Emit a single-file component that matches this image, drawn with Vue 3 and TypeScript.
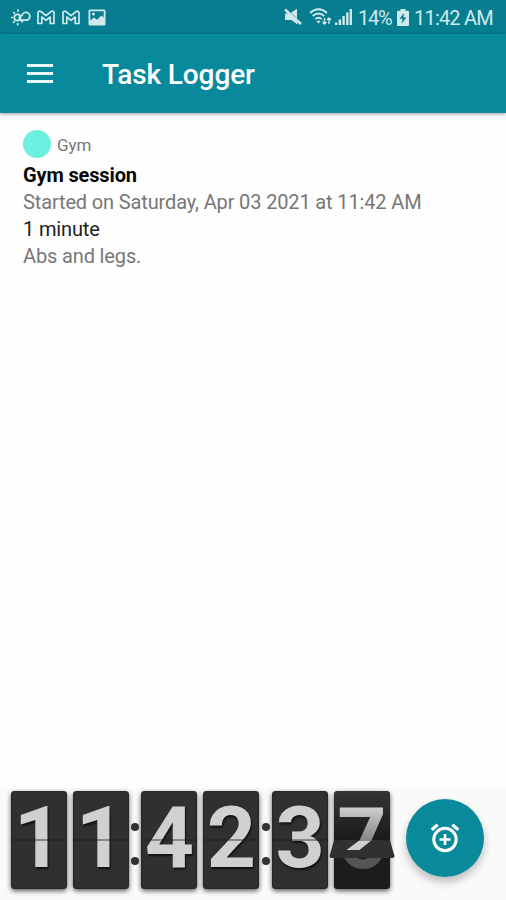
<script setup lang="ts">
interface Task {
  category: string
  color: string
  title: string
  started: string
  duration: string
  notes: string
}

const tasks: Task[] = [
  {
    category: 'Gym',
    color: '#6cf0df',
    title: 'Gym session',
    started: 'Started on Saturday, Apr 03 2021 at 11:42 AM',
    duration: '1 minute',
    notes: 'Abs and legs.',
  },
]

const hours: string[] = ['1', '1']
const minutes: string[] = ['4', '2']
</script>

<template>
  <div class="screen">
    <header class="status">
      <div class="status-left">
        <svg class="weather" width="20" height="18" viewBox="0 0 20 18" fill="none" stroke="currentColor" stroke-width="1.7">
          <circle cx="6.5" cy="9.5" r="3.2" />
          <path d="M7 1.5v2.3M2.2 4l1.7 1.7M0 9.5h2M2 14.8l1.8-1.8M6.7 15v2.5M10.5 13l1.3 1.4" />
          <path d="M9 12.2C7.2 9.3 9.2 7.3 11 7.5c.7-3.2 4.6-4 6.7-2 2.4 2.600.7 6.700-2.700 6.700z" />
        </svg>
        <svg v-for="n in 2" :key="n" class="mail" width="18" height="15" viewBox="0 0 18 15" fill="none" stroke="currentColor" stroke-width="1.700" stroke-linejoin="round">
          <path d="M1 13.500V2.500Q1.500 .5 3.800 1.500L9 5.700l5.200-4.200Q16.500.5 17 2.500v11h-3.800V7L9 10.300 4.800 7v6.500z" />
        </svg>
        <svg class="picture" width="18" height="17" viewBox="0 0 18 17">
          <path fill="currentColor" fill-rule="evenodd" d="M2 .5h14q1.500 0 1.500 1.500v13q0 1.500-1.500 1.500H2Q.5 16.500.5 15V2Q.5.5 2 .5zM2.300 2.300v9.200l3.700-3 3 2.300 4.500-4.200 2.200 2V2.300z" />
          <circle cx="5.500" cy="5" r="1.500" fill="currentColor" />
        </svg>
      </div>
      <div class="status-right">
        <svg class="mute" width="18" height="18" viewBox="0 0 18 18" fill="currentColor">
          <path d="M1 5.500h3.500l9 8.500v2.500L7.500 12H1zM7 4.800 13 .8v9.500z" />
          <path d="M1 1.500 17 16" stroke="currentColor" stroke-width="2.400" />
        </svg>
        <svg class="wifi" width="23" height="18" viewBox="0 0 23 18" fill="none" stroke="currentColor" stroke-width="1.900">
          <path d="M1 5q8.500-7.500 17 0M3.700 8q5.800-5 11.600 0M6.300 11q3.200-2.700 6.400 0" />
          <path d="m9.500 15.500-2-2.300q2-1.500 4 0z" fill="currentColor" stroke="none" />
          <path d="M15.500 10v6m-2-2 2 2 2-2M20 16v-6m-2 2 2-2 2 2" stroke-width="1.400" />
        </svg>
        <svg class="signal" width="17" height="18" viewBox="0 0 17 18" fill="currentColor">
          <path d="M0 14.500h2.400V17H0zM3.700 11.500h2.400V17h-2.400zM7.400 8h2.400v9h-2.400zM11.100 4.500h2.400V17h-2.400zM14.600 1H17v16h-2.400z" />
        </svg>
        <span class="battery-text">14%</span>
        <svg class="battery" width="12" height="17" viewBox="0 0 12 17">
          <path fill="currentColor" fill-rule="evenodd" d="M3.500 0h5v1.800H11q1 0 1 1V16q0 1-1 1H1q-1 0-1-1V2.800q0-1 1-1h2.500zM7 4 2.500 9.800h3L4.700 14.500 9.500 8.500h-3z" />
        </svg>
        <span class="time">11:42 AM</span>
      </div>
    </header>

    <div class="toolbar">
      <button class="menu" aria-label="Menu"><i></i><i></i><i></i></button>
      <h1>Task Logger</h1>
    </div>

    <main>
      <article v-for="task in tasks" :key="task.title">
        <div class="category">
          <span class="dot" :style="{ background: task.color }"></span>
          <span class="category-name">{{ task.category }}</span>
        </div>
        <h2>{{ task.title }}</h2>
        <p class="started">{{ task.started }}</p>
        <p class="duration">{{ task.duration }}</p>
        <p class="notes">{{ task.notes }}</p>
      </article>
    </main>

    <footer>
      <div class="clock">
        <div class="pair">
          <div v-for="(d, i) in hours" :key="i" class="card"><span>{{ d }}</span></div>
        </div>
        <div class="colon"><i></i><i></i></div>
        <div class="pair">
          <div v-for="(d, i) in minutes" :key="i" class="card"><span>{{ d }}</span></div>
        </div>
        <div class="colon"><i></i><i></i></div>
        <div class="pair">
          <div class="card"><span>3</span></div>
          <div class="card turning">
            <svg width="56" height="98" viewBox="0 0 56 98">
              <defs>
                <linearGradient id="upper" x1="0" y1="0" x2="0" y2="1">
                  <stop offset="0" stop-color="#353535" />
                  <stop offset="1" stop-color="#191919" />
                </linearGradient>
                <linearGradient id="ink" gradientUnits="userSpaceOnUse" x1="0" y1="16" x2="0" y2="50">
                  <stop offset="0" stop-color="#cfcfcf" />
                  <stop offset="1" stop-color="#858585" />
                </linearGradient>
                <clipPath id="top-half"><path d="M0 0h56v49.500H0z" /></clipPath>
                <clipPath id="bottom-half"><path d="M0 49.500h56V98H0z" /></clipPath>
              </defs>
              <rect width="56" height="50" rx="4" fill="url(#upper)" />
              <rect y="49" width="56" height="49" rx="4" fill="#1c1c1c" />
              <text x="28" y="77" class="digit" fill="#555" clip-path="url(#bottom-half)">6</text>
              <text x="28" y="77" class="digit" fill="url(#ink)" clip-path="url(#top-half)">7</text>
              <path d="M0 49.500h56l4.500 15.500q0 2-2 2h-61q-2 0-2-2z" fill="#303030" />
              <g transform="translate(0 49.500) scale(1 .34) translate(0 -49.500)">
                <text x="28" y="77" class="digit" fill="#d0d0d0" clip-path="url(#bottom-half)">7</text>
              </g>
            </svg>
          </div>
        </div>
      </div>
      <button class="fab" aria-label="Add task">
        <svg width="30" height="30" viewBox="0 0 30 30" fill="none" stroke="currentColor">
          <circle cx="15" cy="16.500" r="11.200" stroke-width="3" />
          <path d="M15 11v11M9.500 16.500h11" stroke-width="2.700" />
          <path d="m1.700 6.800 6-5M28.300 6.800l-6-5" stroke-width="3.200" />
        </svg>
      </button>
    </footer>
  </div>
</template>

<style>
body {
  margin: 0;
}
</style>

<style scoped>
.screen {
  width: 506px;
  height: 900px;
  display: flex;
  flex-direction: column;
  background: #fefefe;
  font-family: Roboto, sans-serif;
  overflow: hidden;
}
h1, h2, p {
  margin: 0;
}
button {
  border: 0;
  padding: 0;
  background: none;
  color: #fff;
}
svg {
  display: block;
  flex: none;
}
.status {
  height: 34px;
  box-sizing: border-box;
  padding: 0 13px 0 11px;
  display: flex;
  justify-content: space-between;
  align-items: center;
  background: #067e90;
  color: #cfe9ec;
}
.status-left, .status-right {
  display: flex;
  align-items: center;
}
.mail {
  margin-left: 6px;
}
.mail + .mail {
  margin-left: 7px;
}
.picture {
  margin-left: 8px;
}
.wifi {
  margin-left: 7px;
}
.signal {
  margin-left: 3px;
}
.battery-text, .time {
  font-size: 20px;
  line-height: 34px;
  white-space: nowrap;
  padding-top: 1px;
}
.battery-text {
  width: 33px;
  margin-left: 6px;
  letter-spacing: -1.2px;
}
.battery {
  margin-left: 6px;
}
.time {
  width: 79px;
  margin-left: 5px;
  letter-spacing: -0.8px;
}
.toolbar {
  height: 79px;
  flex: none;
  display: flex;
  align-items: center;
  padding-left: 27px;
  background: #08899c;
  box-shadow: 0 1px 4px rgba(0, 0, 0, 0.4);
  z-index: 1;
}
.menu {
  width: 26px;
  display: flex;
  flex-direction: column;
  gap: 5px;
}
.menu i {
  height: 3px;
  background: #e9f7f8;
}
h1 {
  margin-left: 49px;
  padding-top: 3px;
  color: #fff;
  font-size: 28px;
  font-weight: 500;
  line-height: 34px;
  letter-spacing: -0.1px;
}
main {
  flex: 1;
  padding: 16px 23px;
}
.category {
  display: flex;
  align-items: center;
  height: 30px;
}
.dot {
  width: 28px;
  height: 28px;
  border-radius: 50%;
}
.category-name {
  margin-left: 6px;
  font-size: 17px;
  padding-top: 2px;
  color: #777;
}
h2, p {
  font-size: 20px;
  line-height: 27px;
  font-weight: 400;
  color: #777;
  white-space: nowrap;
  letter-spacing: -0.14px;
}
h2 {
  padding-top: 3px;
  font-weight: 700;
  color: #080808;
}
.duration {
  color: #222;
}
footer {
  height: 112px;
  flex: none;
  box-sizing: border-box;
  padding: 3px 22px 0 10.5px;
  display: flex;
  justify-content: space-between;
  background: #fafafa;
}
.clock, .pair {
  display: flex;
}
.pair {
  gap: 6px;
}
.card {
  position: relative;
  width: 56px;
  height: 98px;
  border-radius: 4px;
  background: #303030;
  box-shadow: 0 2px 5px rgba(0, 0, 0, 0.65), inset 0 0 2px #111;
  color: #d0d0d0;
  font-size: 86px;
  font-weight: 700;
  line-height: 94px;
  text-align: center;
  text-shadow: 1px 2px 2px #111;
}
.card::after {
  content: '';
  position: absolute;
  inset: 48px 0 auto;
  height: 2px;
  background: rgba(25, 25, 25, 0.4);
}
.turning::after {
  display: none;
}
.turning svg {
  overflow: visible;
}
.digit {
  font-size: 86px;
  font-weight: 700;
  text-anchor: middle;
  text-shadow: none;
}
.colon {
  width: 12.8px;
  height: 98px;
  display: flex;
  flex-direction: column;
  align-items: center;
  gap: 26px;
  padding-top: 32px;
  box-sizing: border-box;
}
.colon i {
  width: 8px;
  height: 8px;
  border-radius: 50%;
  background: #333;
}
.fab {
  width: 78px;
  height: 78px;
  margin-top: 8px;
  border-radius: 50%;
  background: #08899c;
  box-shadow: 0 5px 9px rgba(0, 0, 0, 0.25);
  display: grid;
  place-items: center;
}
</style>
